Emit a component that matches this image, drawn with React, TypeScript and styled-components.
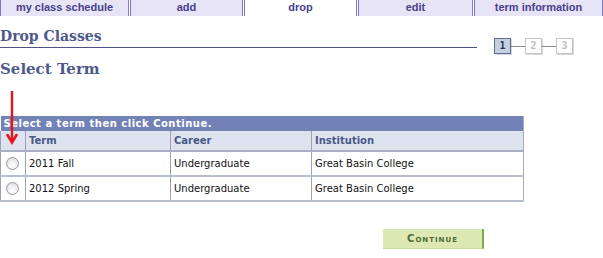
import styled, {createGlobalStyle} from "styled-components";

const GlobalStyle = createGlobalStyle`
    html, body {
        margin: 0;
        padding: 0;
        background: #ffffff;
    }
    body {
        font-family: "DejaVu Sans", Verdana, sans-serif;
    }
`;

const tabs = [
    {label: "my class schedule", width: 129},
    {label: "add", width: 113},
    {label: "drop", width: 113, active: true},
    {label: "edit", width: 115},
    {label: "term information", width: 129},
];

const terms = [
    {term: "2011 Fall", career: "Undergraduate", institution: "Great Basin College"},
    {term: "2012 Spring", career: "Undergraduate", institution: "Great Basin College"},
];

const App = () => {
    return (
        <>
            <GlobalStyle/>
            <Page>
                <TabBar>
                    {tabs.map((tab) => (
                        <Tab key={tab.label} $width={tab.width} $active={!!tab.active}>
                            {tab.label}
                        </Tab>
                    ))}
                </TabBar>

                <HeaderRow>
                    <PageTitle>Drop Classes</PageTitle>
                    <Steps>
                        <StepBox $active>1</StepBox>
                        <StepLine/>
                        <StepBox>2</StepBox>
                        <StepLine/>
                        <StepBox>3</StepBox>
                    </Steps>
                </HeaderRow>

                <SubTitle>Select Term</SubTitle>

                <TableArea>
                    <Arrow width="12" height="54" viewBox="0 0 12 54">
                        <line x1="6" y1="0" x2="6" y2="51" stroke="#e8141b" strokeWidth="2.4"/>
                        <polyline points="1.5,44 6,51.5 10.5,44" fill="none" stroke="#e8141b"
                                  strokeWidth="2.6" strokeLinecap="round"/>
                    </Arrow>
                    <TermTable>
                        <thead>
                        <tr>
                            <Caption colSpan={4}>Select a term then click Continue.</Caption>
                        </tr>
                        <tr>
                            <HeadCell $width={25}></HeadCell>
                            <HeadCell $width={145}>Term</HeadCell>
                            <HeadCell $width={141}>Career</HeadCell>
                            <HeadCell>Institution</HeadCell>
                        </tr>
                        </thead>
                        <tbody>
                        {terms.map((row) => (
                            <tr key={row.term}>
                                <Cell><Radio/></Cell>
                                <Cell>{row.term}</Cell>
                                <Cell>{row.career}</Cell>
                                <Cell>{row.institution}</Cell>
                            </tr>
                        ))}
                        </tbody>
                    </TermTable>
                </TableArea>

                <ButtonRow>
                    <ContinueButton>Continue</ContinueButton>
                </ButtonRow>
            </Page>
        </>
    );
};

export default App;

const Page = styled.div`
    width: 603px;
    height: 258px;
    overflow: hidden;
`;

const TabBar = styled.div`
    display: flex;
    gap: 1px;
    height: 16px;
`;

const Tab = styled.div<{ $width: number; $active: boolean }>`
    width: ${(p) => p.$width}px;
    box-sizing: border-box;
    height: 16px;
    border-left: 1px solid #8177cf;
    border-right: 1px solid #8177cf;
    background: ${(p) => (p.$active ? "#ffffff" : "#e7e4f6")};
    color: #4a3f8e;
    font-family: "Liberation Sans", Arial, sans-serif;
    font-weight: bold;
    font-size: 11px;
    line-height: 14px;
    text-align: center;
`;

const HeaderRow = styled.div`
    display: flex;
    align-items: flex-start;
    margin-top: 11px;
`;

const PageTitle = styled.h1`
    width: 477px;
    margin: 0;
    box-sizing: border-box;
    height: 21px;
    border-bottom: 1px solid #4c5380;
    font-family: "DejaVu Serif", Georgia, serif;
    font-size: 14px;
    font-weight: bold;
    line-height: 18px;
    color: #4e5a8b;
`;

const Steps = styled.div`
    display: flex;
    align-items: center;
    margin: 11px 0 0 17px;
`;

const StepBox = styled.div<{ $active?: boolean }>`
    width: 17px;
    height: 16px;
    box-sizing: border-box;
    border: 1px solid ${(p) => (p.$active ? "#5d6e93" : "#c4c4c4")};
    background: ${(p) => (p.$active ? "#c3d1e3" : "#ffffff")};
    box-shadow: 1px 1px 0 #d8d8d8;
    color: ${(p) => (p.$active ? "#2c3550" : "#bdbdbd")};
    font-family: "DejaVu Sans Mono", monospace;
    font-size: 10px;
    font-weight: bold;
    line-height: 14px;
    text-align: center;
`;

const StepLine = styled.div`
    width: 14px;
    height: 1px;
    background: #8a8a8a;
`;

const SubTitle = styled.h2`
    margin: 5px 0 0 0;
    font-family: "DejaVu Serif", Georgia, serif;
    font-size: 15px;
    font-weight: bold;
    line-height: 20px;
    color: #4e5a8b;
`;

const TableArea = styled.div`
    position: relative;
    margin-top: 37px;
`;

const Arrow = styled.svg`
    position: absolute;
    left: 6px;
    top: -25px;
    z-index: 2;
`;

const TermTable = styled.table`
    width: 524px;
    border-collapse: collapse;
    border-right: 1px solid #a6acbf;
    font-family: "DejaVu Sans", Verdana, sans-serif;
    font-size: 10px;
`;

const Caption = styled.th`
    height: 15px;
    padding: 0 0 0 3px;
    background: #7282b6;
    color: #ffffff;
    text-align: left;
    font-weight: bold;
    font-size: 10px;
    letter-spacing: 0.5px;
    line-height: 15px;
`;

const HeadCell = styled.th<{ $width?: number }>`
    width: ${(p) => (p.$width ? `${p.$width}px` : "auto")};
    height: 20px;
    box-sizing: border-box;
    padding: 0 3px;
    background: #dde3ef;
    border-left: 1px solid #9aa1b8;
    border-bottom: 2px solid #a9b0c3;
    color: #4a5888;
    text-align: left;
    font-weight: bold;
    font-size: 10px;
`;

const Cell = styled.td`
    height: 25px;
    box-sizing: border-box;
    padding: 0 3px;
    border-left: 1px solid #9aa1b8;
    border-bottom: 2px solid #b8bdcc;
    color: #111111;
    font-size: 10px;
    vertical-align: middle;
`;

const Radio = styled.span`
    display: block;
    width: 13px;
    height: 13px;
    margin-left: 2px;
    border-radius: 50%;
    border: 1px solid #9a9a9a;
    background: radial-gradient(circle at 50% 70%, #ffffff 0%, #ececec 55%, #cfcfcf 100%);
    box-sizing: border-box;
`;

const ButtonRow = styled.div`
    display: flex;
    padding-left: 383px;
    margin-top: 27px;
`;

const ContinueButton = styled.button`
    width: 101px;
    height: 20px;
    box-sizing: border-box;
    border: none;
    border-right: 2px solid #7cab47;
    border-bottom: 1px solid #c9dca0;
    background: #dde9b4;
    color: #4f6b37;
    font-family: "DejaVu Sans", Verdana, sans-serif;
    font-size: 10px;
    font-weight: bold;
    font-variant: small-caps;
    letter-spacing: 1px;
    padding: 0;
    cursor: pointer;
`;
